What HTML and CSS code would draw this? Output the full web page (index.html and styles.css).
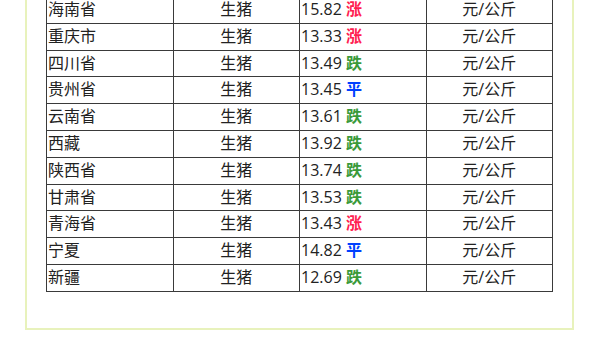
FILE: index.html
```html
<!DOCTYPE html>
<html lang="zh-CN">
<head>
    <meta charset="UTF-8">
    <meta name="viewport" content="width=device-width, initial-scale=1.0">
    <title>生猪价格</title>
    <link rel="stylesheet" href="styles.css">
</head>
<body>
    <div class="content">
        <table class="price-table">
            <tr><td>海南省</td><td class="c">生猪</td><td>15.82 <span class="up">涨</span></td><td class="c">元/公斤</td></tr>
            <tr><td>重庆市</td><td class="c">生猪</td><td>13.33 <span class="up">涨</span></td><td class="c">元/公斤</td></tr>
            <tr><td>四川省</td><td class="c">生猪</td><td>13.49 <span class="down">跌</span></td><td class="c">元/公斤</td></tr>
            <tr><td>贵州省</td><td class="c">生猪</td><td>13.45 <span class="flat">平</span></td><td class="c">元/公斤</td></tr>
            <tr><td>云南省</td><td class="c">生猪</td><td>13.61 <span class="down">跌</span></td><td class="c">元/公斤</td></tr>
            <tr><td>西藏</td><td class="c">生猪</td><td>13.92 <span class="down">跌</span></td><td class="c">元/公斤</td></tr>
            <tr><td>陕西省</td><td class="c">生猪</td><td>13.74 <span class="down">跌</span></td><td class="c">元/公斤</td></tr>
            <tr><td>甘肃省</td><td class="c">生猪</td><td>13.53 <span class="down">跌</span></td><td class="c">元/公斤</td></tr>
            <tr><td>青海省</td><td class="c">生猪</td><td>13.43 <span class="up">涨</span></td><td class="c">元/公斤</td></tr>
            <tr><td>宁夏</td><td class="c">生猪</td><td>14.82 <span class="flat">平</span></td><td class="c">元/公斤</td></tr>
            <tr><td>新疆</td><td class="c">生猪</td><td>12.69 <span class="down">跌</span></td><td class="c">元/公斤</td></tr>
        </table>
    </div>
</body>
</html>
```

FILE: styles.css
```css
body {
    margin: 0;
    background: #fff;
    font-family: "Open Sans", "Noto Sans CJK SC", sans-serif;
    color: #222;
}

.content {
    width: 507px;
    margin: -6px 0 0 25px;
    padding: 0 19px 36px 19px;
    border: 2px solid #e8f2bc;
}

.price-table {
    width: 507px;
    border-collapse: collapse;
    table-layout: fixed;
    font-size: 16px;
}

.price-table td {
    width: 25%;
    border: 1px solid #3a3a3a;
    padding: 0 1px;
    line-height: 25.8px;
    white-space: nowrap;
}

.price-table td.c {
    text-align: center;
}

.up {
    color: #ff2050;
    font-weight: bold;
}

.down {
    color: #3a9a3a;
    font-weight: bold;
}

.flat {
    color: #0040ff;
    font-weight: bold;
}
```
